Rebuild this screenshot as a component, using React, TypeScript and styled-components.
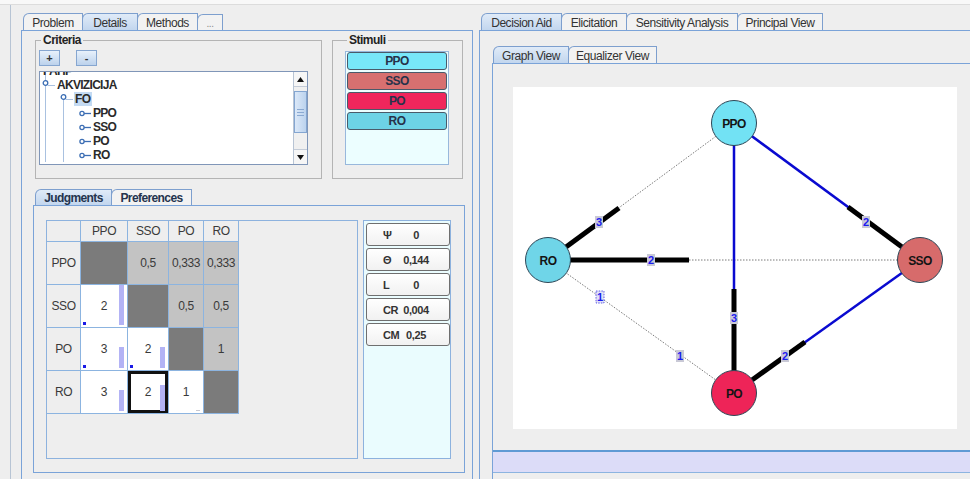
import React from 'react'
import styled, { createGlobalStyle } from 'styled-components'

const GlobalStyle = createGlobalStyle`
  body {
    margin: 0;
    background: #eeeeee;
    font-family: "Liberation Sans", Arial, sans-serif;
  }
  #root {
    width: 970px;
    height: 479px;
    overflow: hidden;
  }
`

const Page = styled.div`
  width: 970px;
  height: 479px;
  overflow: hidden;
  display: flex;
  flex-direction: column;
  background: #eeeeee;
`

const TopStrip = styled.div`
  flex-shrink: 0;
  height: 4px;
  background: #f8f8f8;
  border-bottom: 1px solid #dcdcdc;
`

const Workspace = styled.div`
  flex: 1;
  min-height: 0;
  display: flex;
  gap: 6px;
  margin-left: 10px;
  padding: 8px 0 0 10px;
  border-left: 1px solid #b7c4d4;
  overflow: hidden;
`

const Pane = styled.div<{ $w?: number }>`
  display: flex;
  flex-direction: column;
  flex-shrink: 0;
  width: ${p => (p.$w ? `${p.$w}px` : 'auto')};
`

const TabStrip = styled.div<{ $h: number; $pl: number }>`
  display: flex;
  align-items: flex-end;
  height: ${p => p.$h}px;
  padding-left: ${p => p.$pl}px;
  flex-shrink: 0;
`

const Tab = styled.div<{ $w: number; $h?: number; $active?: boolean; $bold?: boolean; $muted?: boolean }>`
  box-sizing: border-box;
  width: ${p => p.$w}px;
  height: ${p => p.$h ?? 17}px;
  margin-right: -1px;
  padding-top: 1px;
  border: 1px solid #7d9fce;
  border-bottom: none;
  border-top-left-radius: 6px;
  display: flex;
  align-items: center;
  justify-content: center;
  font-size: ${p => (p.$muted ? 10 : 12)}px;
  font-weight: ${p => (p.$bold ? 700 : 400)};
  letter-spacing: ${p => (p.$bold ? '-0.6px' : '-0.45px')};
  color: ${p => (p.$muted ? '#8a8a8a' : p.$bold ? '#24344e' : '#333')};
  background: ${p => (p.$active ? 'linear-gradient(#e0ebf8, #c2d6ee)' : '#f2f2f2')};
  position: relative;
  z-index: ${p => (p.$active ? 1 : 0)};
`

const TabBody = styled.div<{ $closed?: boolean }>`
  flex: 1;
  min-height: 0;
  display: flex;
  flex-direction: column;
  border: 1px solid #7aa3d8;
  border-bottom: ${p => (p.$closed ? '1px solid #7aa3d8' : 'none')};
  border-right: ${p => (p.$closed ? '1px solid #7aa3d8' : 'none')};
`

const MainBody = styled(TabBody)`
  border-right: 1px solid #7aa3d8;
`

/* ---------- criteria / stimuli ---------- */

const TopRow = styled.div`
  display: flex;
  gap: 10px;
  padding: 3px 9px 0 13px;
`

const Group = styled.fieldset<{ $w: number; $pad: string }>`
  box-sizing: border-box;
  width: ${p => p.$w}px;
  height: 145px;
  margin: 0;
  min-width: 0;
  padding: ${p => p.$pad};
  border: 1px solid #b4b4b4;
`

const Legend = styled.legend`
  padding: 0 2px;
  margin-left: 2px;
  font-size: 12px;
  font-weight: 700;
  letter-spacing: -0.5px;
  line-height: 13px;
  color: #222;
`

const ButtonRow = styled.div`
  display: flex;
  gap: 16px;
`

const SmallButton = styled.button`
  width: 21px;
  height: 16px;
  padding: 0;
  border: 1px solid #86a6d0;
  background: linear-gradient(#e8f1fb, #bcd2ec);
  font-family: "Liberation Sans", Arial, sans-serif;
  font-size: 11px;
  font-weight: 700;
  color: #333;
  line-height: 1;
`

const TreeBox = styled.div`
  box-sizing: border-box;
  margin-top: 5px;
  width: 269px;
  height: 94px;
  border: 1px solid #8096b8;
  background: #fff;
  display: flex;
`

const TreeView = styled.div`
  flex: 1;
  overflow: hidden;
`

const TreeBody = styled.div`
  margin-top: -8px;
  background:
    linear-gradient(#a9c1e0, #a9c1e0) 5px 0 / 1px 100% no-repeat,
    linear-gradient(#a9c1e0, #a9c1e0) 23px 40px / 1px 100% no-repeat;
`

const TreeRow = styled.div<{ $indent: number }>`
  height: 14px;
  display: flex;
  align-items: center;
  padding-left: ${p => p.$indent}px;
  font-size: 12px;
  font-weight: 700;
  letter-spacing: -0.7px;
  color: #2a2a2a;
`

const TreeLabel = styled.span<{ $selected?: boolean }>`
  padding: 0 2px 0 1px;
  line-height: 14px;
  background: ${p => (p.$selected ? '#c4daf2' : 'transparent')};
`

const ScrollBar = styled.div`
  width: 13px;
  display: flex;
  flex-direction: column;
  border-left: 1px solid #b8c4d4;
  background: #f0f0f0;
`

const ScrollArrow = styled.div`
  height: 14px;
  display: flex;
  align-items: center;
  justify-content: center;
  background: #f6f6f6;
  border-bottom: 1px solid #c4ccd8;
  &:last-child {
    border-bottom: none;
    border-top: 1px solid #c4ccd8;
  }
`

const ScrollTrack = styled.div`
  flex: 1;
  padding-top: 4px;
`

const ScrollThumb = styled.div`
  box-sizing: border-box;
  height: 42px;
  border: 1px solid #84a6d1;
  background: linear-gradient(90deg, #dbe8f8, #bcd3ee);
  display: flex;
  flex-direction: column;
  justify-content: center;
  align-items: center;
  gap: 2px;
`

const Grip = styled.div`
  width: 7px;
  height: 1px;
  background: #8aa9d2;
`

const StimuliList = styled.div`
  box-sizing: border-box;
  width: 104px;
  height: 114px;
  padding: 0 1px;
  border: 1px solid #98b8dc;
  background: #ecfeff;
  display: flex;
  flex-direction: column;
  gap: 2px;
`

const StimulusItem = styled.div<{ $bg: string }>`
  box-sizing: border-box;
  height: 18px;
  border: 1px solid #4a5a6a;
  border-radius: 3px;
  background: ${p => p.$bg};
  display: flex;
  align-items: center;
  justify-content: center;
  font-size: 12px;
  font-weight: 700;
  letter-spacing: -0.6px;
  color: #27324a;
`

/* ---------- judgments ---------- */

const JudgmentsPane = styled.div`
  display: flex;
  flex-direction: column;
  margin: 10px 7px 0 11px;
`

const JudgmentsBody = styled.div`
  box-sizing: border-box;
  height: 268px;
  display: flex;
  gap: 5px;
  padding: 14px 13px 13px 12px;
  border: 1px solid #7aa3d8;
`

const MatrixPanel = styled.div`
  width: 312px;
  border: 1px solid #8db2de;
  background: #eeeeee;
`

const Matrix = styled.div`
  display: grid;
  grid-template-columns: 34px 47px 41px 35px 35px;
  grid-template-rows: 21px repeat(4, 43px);
  width: 192px;
`

type CellKind = 'corner' | 'head' | 'diag' | 'upper' | 'lower'

const cellBg: Record<CellKind, string> = {
  corner: '#eeeeee',
  head: '#eeeeee',
  diag: '#7b7b7b',
  upper: '#c3c3c3',
  lower: '#ffffff',
}

const Cell = styled.div<{ $kind: CellKind; $selected?: boolean }>`
  position: relative;
  box-sizing: border-box;
  display: flex;
  align-items: center;
  justify-content: center;
  border-right: 1px solid #8cb4e0;
  border-bottom: 1px solid #8cb4e0;
  background: ${p => cellBg[p.$kind]};
  font-size: 12px;
  letter-spacing: -0.4px;
  color: #3a3a3a;
  box-shadow: ${p => (p.$selected ? 'inset 0 0 0 3px #111' : 'none')};
`

const Bar = styled.span<{ $h: number; $color?: string }>`
  position: absolute;
  right: 3px;
  bottom: 2px;
  width: ${p => (p.$h === 1 ? 4 : 5)}px;
  height: ${p => p.$h}px;
  background: ${p => p.$color ?? '#b3b3f5'};
`

const Dot = styled.span`
  position: absolute;
  left: 2px;
  bottom: 2px;
  width: 3px;
  height: 3px;
  background: #1a1ae6;
`

const MetricPanel = styled.div`
  width: 88px;
  box-sizing: border-box;
  border: 1px solid #8db2de;
  background: #eafcfe;
  padding: 2px 0 0 2px;
  display: flex;
  flex-direction: column;
  gap: 2px;
`

const MetricButton = styled.div`
  box-sizing: border-box;
  width: 84px;
  height: 23px;
  border: 1px solid #6f6f6f;
  border-radius: 3px;
  background: linear-gradient(#ffffff, #f1f1f1);
  display: grid;
  grid-template-columns: 18px 30px;
  align-items: center;
  padding-left: 16px;
  font-size: 11px;
  font-weight: 700;
  letter-spacing: -0.4px;
  color: #333;
`

const MetricValue = styled.span`
  text-align: center;
`

/* ---------- right side ---------- */

const RightBody = styled(TabBody)`
  padding: 15px 0 0 12px;
`

const InnerPane = styled.div`
  flex: 1;
  display: flex;
  flex-direction: column;
`

const InnerBody = styled.div`
  flex: 1;
  display: flex;
  flex-direction: column;
  border-left: 1px solid #7aa3d8;
  border-top: 1px solid #7aa3d8;
`

const GraphWrap = styled.div`
  padding: 23px 0 21px 20px;
`

const GraphCanvas = styled.svg`
  display: block;
  background: #ffffff;
`

const StatusBar = styled.div`
  height: 20px;
  border-top: 2px solid #5f9ad4;
  border-bottom: 1px solid #8cb4e0;
  background: #dcdcf8;
`

/* ---------- icons ---------- */

const OpenIcon = () => (
  <svg width="14" height="14" viewBox="0 0 14 14" style={{ flexShrink: 0 }}>
    <line x1="3.5" y1="7" x2="3.5" y2="14" stroke="#a9c1e0" />
    <line x1="6" y1="7.5" x2="13" y2="7.5" stroke="#a9c1e0" />
    <circle cx="3.5" cy="5" r="2.3" fill="#fff" stroke="#3c6eb4" strokeWidth="1.3" />
  </svg>
)

const LeafIcon = () => (
  <svg width="14" height="14" viewBox="0 0 14 14" style={{ flexShrink: 0 }}>
    <line x1="6" y1="7.5" x2="13" y2="7.5" stroke="#3c6eb4" strokeWidth="1.3" />
    <circle cx="4" cy="7.5" r="2.1" fill="#fff" stroke="#3c6eb4" strokeWidth="1.3" />
  </svg>
)

const Arrow = ({ up }: { up?: boolean }) => (
  <svg width="7" height="5" viewBox="0 0 7 5">
    <polygon points={up ? '0,5 7,5 3.5,0' : '0,0 7,0 3.5,5'} fill="#111" />
  </svg>
)

/* ---------- data ---------- */

const stimuli = [
  { name: 'PPO', color: '#78e7f9' },
  { name: 'SSO', color: '#d77070' },
  { name: 'PO', color: '#f0265c' },
  { name: 'RO', color: '#6dd3e6' },
]

const metrics = [
  ['Ψ', '0'],
  ['Θ', '0,144'],
  ['L', '0'],
  ['CR', '0,004'],
  ['CM', '0,25'],
]

const names = ['PPO', 'SSO', 'PO', 'RO']

type Lower = { value: string; bar: number; dot?: boolean; selected?: boolean; barColor?: string }

const upper: Record<string, string> = {
  '0-1': '0,5',
  '0-2': '0,333',
  '0-3': '0,333',
  '1-2': '0,5',
  '1-3': '0,5',
  '2-3': '1',
}

const lower: Record<string, Lower> = {
  '1-0': { value: '2', bar: 40, dot: true },
  '2-0': { value: '3', bar: 21, dot: true },
  '2-1': { value: '2', bar: 21, dot: true },
  '3-0': { value: '3', bar: 21 },
  '3-1': { value: '2', bar: 26, selected: true },
  '3-2': { value: '1', bar: 1, barColor: '#c8c8d0' },
}

const graphNodes = [
  { id: 'PPO', x: 221, y: 36, fill: '#72e2f4' },
  { id: 'RO', x: 35, y: 173, fill: '#6fd5e8' },
  { id: 'SSO', x: 407, y: 173, fill: '#d76b6b' },
  { id: 'PO', x: 221, y: 306, fill: '#ee2458' },
]

const dottedEdges = [
  [35, 173, 221, 36],
  [35, 173, 407, 173],
  [35, 173, 221, 306],
]

const blueEdges = [
  [221, 36, 221, 306],
  [221, 36, 407, 173],
  [407, 173, 221, 306],
]

const thickEdges = [
  [53, 160, 106, 121],
  [57, 173, 176, 173],
  [221, 202, 221, 284],
  [335, 120, 389, 160],
  [292, 255, 239, 293],
]

const edgeLabels = [
  { t: '3', x: 86, y: 135 },
  { t: '2', x: 138, y: 173 },
  { t: '1', x: 87, y: 210, selected: true },
  { t: '1', x: 167, y: 269 },
  { t: '3', x: 221, y: 231 },
  { t: '2', x: 353, y: 135 },
  { t: '2', x: 272, y: 269 },
]

const renderCell = (r: number, c: number) => {
  const key = `${r}-${c}`
  if (r === c) return <Cell key={key} $kind="diag" />
  if (c > r) return <Cell key={key} $kind="upper">{upper[key]}</Cell>
  const l = lower[key]
  return (
    <Cell key={key} $kind="lower" $selected={l.selected}>
      {l.value}
      <Bar $h={l.bar} $color={l.barColor} />
      {l.dot && <Dot />}
    </Cell>
  )
}

const Graph = () => (
  <GraphCanvas width="444" height="342" viewBox="0 0 444 342">
    {dottedEdges.map(([x1, y1, x2, y2], i) => (
      <line key={`d${i}`} x1={x1} y1={y1} x2={x2} y2={y2} stroke="#7a7a7a" strokeWidth="1" strokeDasharray="1.5 1.5" />
    ))}
    {blueEdges.map(([x1, y1, x2, y2], i) => (
      <line key={`b${i}`} x1={x1} y1={y1} x2={x2} y2={y2} stroke="#0a0ad0" strokeWidth="2.5" />
    ))}
    {thickEdges.map(([x1, y1, x2, y2], i) => (
      <line key={`t${i}`} x1={x1} y1={y1} x2={x2} y2={y2} stroke="#000" strokeWidth="5" />
    ))}
    {graphNodes.map(n => (
      <g key={n.id}>
        <circle cx={n.x} cy={n.y} r="22.5" fill={n.fill} stroke="#2d4656" strokeWidth="1" />
        <text
          x={n.x}
          y={n.y + 4.5}
          textAnchor="middle"
          fontFamily="Liberation Sans, Arial, sans-serif"
          fontSize="12"
          fontWeight="700"
          letterSpacing="-0.6"
          fill="#141414"
        >
          {n.id}
        </text>
      </g>
    ))}
    {edgeLabels.map((l, i) => (
      <g key={`l${i}`}>
        <rect
          x={l.x - 4}
          y={l.y - 6}
          width="8"
          height="12"
          fill={l.selected ? '#e2e2f6' : '#c9c9d6'}
          stroke={l.selected ? '#3b3bdf' : 'none'}
          strokeWidth="0.8"
          strokeDasharray="1.5 1.2"
        />
        <text
          x={l.x}
          y={l.y + 4}
          textAnchor="middle"
          fontFamily="Liberation Sans, Arial, sans-serif"
          fontSize="11"
          fontWeight="700"
          fill="#1c1cf0"
        >
          {l.t}
        </text>
      </g>
    ))}
  </GraphCanvas>
)

const App = () => {
  return (
    <>
      <GlobalStyle />
      <Page>
        <TopStrip />
        <Workspace>
          <Pane $w={452}>
            <TabStrip $h={17} $pl={2}>
              <Tab $w={60}>Problem</Tab>
              <Tab $w={56} $active>Details</Tab>
              <Tab $w={61}>Methods</Tab>
              <Tab $w={26} $h={16} $muted>...</Tab>
            </TabStrip>
            <MainBody>
              <TopRow>
                <Group $w={287} $pad="3px 3px 13px 3px">
                  <Legend>Criteria</Legend>
                  <ButtonRow>
                    <SmallButton>+</SmallButton>
                    <SmallButton>-</SmallButton>
                  </ButtonRow>
                  <TreeBox>
                    <TreeView>
                      <TreeBody>
                        <TreeRow $indent={2}><TreeLabel>FAHP</TreeLabel></TreeRow>
                        <TreeRow $indent={2}><OpenIcon /><TreeLabel>AKVIZICIJA</TreeLabel></TreeRow>
                        <TreeRow $indent={20}><OpenIcon /><TreeLabel $selected>FO</TreeLabel></TreeRow>
                        {names.map(n => (
                          <TreeRow key={n} $indent={38}><LeafIcon /><TreeLabel>{n}</TreeLabel></TreeRow>
                        ))}
                      </TreeBody>
                    </TreeView>
                    <ScrollBar>
                      <ScrollArrow><Arrow up /></ScrollArrow>
                      <ScrollTrack>
                        <ScrollThumb>
                          <Grip />
                          <Grip />
                          <Grip />
                        </ScrollThumb>
                      </ScrollTrack>
                      <ScrollArrow><Arrow /></ScrollArrow>
                    </ScrollBar>
                  </TreeBox>
                </Group>
                <Group $w={131} $pad="4px 13px 13px 12px">
                  <Legend>Stimuli</Legend>
                  <StimuliList>
                    {stimuli.map(s => (
                      <StimulusItem key={s.name} $bg={s.color}>{s.name}</StimulusItem>
                    ))}
                  </StimuliList>
                </Group>
              </TopRow>

              <JudgmentsPane>
                <TabStrip $h={16} $pl={2}>
                  <Tab $w={77} $h={16} $active $bold>Judgments</Tab>
                  <Tab $w={81} $h={16} $bold>Preferences</Tab>
                </TabStrip>
                <JudgmentsBody>
                  <MatrixPanel>
                    <Matrix>
                      <Cell $kind="corner" />
                      {names.map(n => (
                        <Cell key={`h${n}`} $kind="head">{n}</Cell>
                      ))}
                      {names.map((rowName, r) => (
                        <React.Fragment key={rowName}>
                          <Cell $kind="head">{rowName}</Cell>
                          {names.map((_, c) => renderCell(r, c))}
                        </React.Fragment>
                      ))}
                    </Matrix>
                  </MatrixPanel>
                  <MetricPanel>
                    {metrics.map(([k, v]) => (
                      <MetricButton key={k}>
                        <span>{k}</span>
                        <MetricValue>{v}</MetricValue>
                      </MetricButton>
                    ))}
                  </MetricPanel>
                </JudgmentsBody>
              </JudgmentsPane>
            </MainBody>
          </Pane>

          <Pane $w={520}>
            <TabStrip $h={17} $pl={2}>
              <Tab $w={81} $active>Decision Aid</Tab>
              <Tab $w={66}>Elicitation</Tab>
              <Tab $w={112}>Sensitivity Analysis</Tab>
              <Tab $w={86}>Principal View</Tab>
            </TabStrip>
            <RightBody>
              <InnerPane>
                <TabStrip $h={17} $pl={1}>
                  <Tab $w={76} $active>Graph View</Tab>
                  <Tab $w={89}>Equalizer View</Tab>
                </TabStrip>
                <InnerBody>
                  <GraphWrap>
                    <Graph />
                  </GraphWrap>
                  <StatusBar />
                </InnerBody>
              </InnerPane>
            </RightBody>
          </Pane>
        </Workspace>
      </Page>
    </>
  )
}

export default App
